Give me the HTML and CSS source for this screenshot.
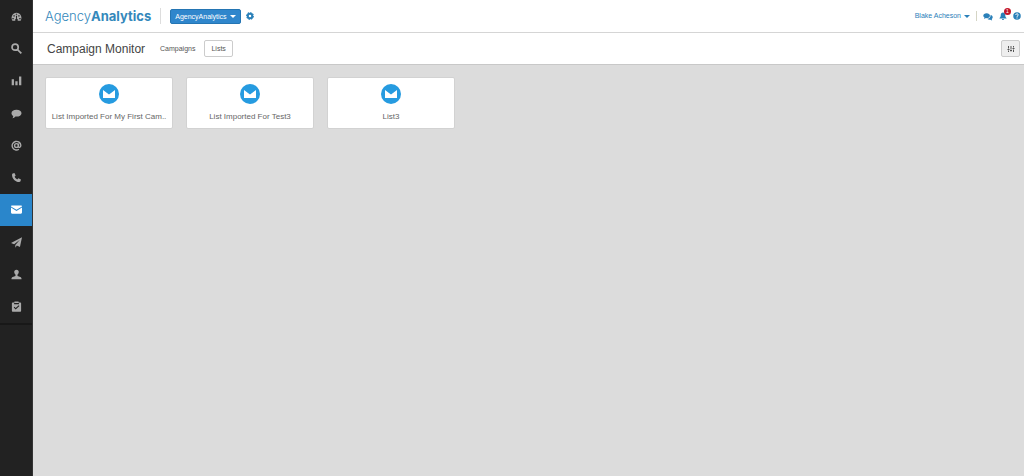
FILE: index.html
```
<!DOCTYPE html>
<html lang="en">
<head>
    <meta charset="utf-8">
    <title>Campaign Monitor</title>
    <link rel="stylesheet" href="styles.css">
</head>
<body>
<nav class="sidebar" aria-label="Main">
    <ul class="menu">
        <li><a href="#" aria-label="Dashboard"><svg viewBox="0 0 16 16"><path fill-rule="evenodd" d="M8 2.500A7.500 7.500 0 0 0 2 14h4.500a1.700 1.700 0 0 1 .9-2.600L7.200 7h1.600l-.2 4.400A1.700 1.700 0 0 1 9.500 14H14A7.500 7.500 0 0 0 8 2.500zM7 4h2v1.600H7zM3.500 6h2v2h-2zM10.500 6h2v2h-2zM2 10h2v2H2zM12 10h2v2h-2z"/></svg></a></li>
        <li><a href="#" aria-label="Search"><svg viewBox="0 0 16 16"><circle class="line" cx="6" cy="6" r="4.500"/><path class="line" d="M9.500 9.500l5.500 5.500"/></svg></a></li>
        <li><a href="#" aria-label="Reports"><svg viewBox="0 0 16 16"><path d="M1 6h3.300v9H1zM6.300 9h3.300v6H6.300zM11.700 2H15v13h-3.300z"/></svg></a></li>
        <li><a href="#" aria-label="Social"><svg viewBox="0 0 16 16"><path d="M8 2.500c4.300 0 7.300 2.200 7.300 5s-3 5-7.300 5l-1.500-.1C5.300 13.800 3.700 14.700 2 15c.8-1 1.300-2.200 1.200-3.500C1.600 10.600.7 9.200.7 7.500c0-2.800 3-5 7.300-5z"/></svg></a></li>
        <li><a href="#" aria-label="Email"><svg viewBox="0 0 16 16"><circle class="thin" cx="8" cy="8" r="2.800"/><path class="thin" d="M10.800 5v4.200c0 2.300 3.500 2 3.500-1.500A6.300 6.300 0 1 0 11.500 13.500"/></svg></a></li>
        <li><a href="#" aria-label="Calls"><svg viewBox="0 0 16 16"><path d="M2.500 2.200L5 1.500l1.800 3.700L5.200 7c.8 1.700 2 2.900 3.800 3.800l1.800-1.600 3.700 1.800-.7 2.500c-.3.700-1 1-2 1C6.500 14.500 1.500 9.500 1.500 4.200c0-1 .3-1.700 1-2z"/></svg></a></li>
        <li class="active"><a href="#" aria-label="Campaign Monitor"><svg viewBox="0 0 16 16"><path d="M0 3.500C0 2.700.5 2 1.500 2h13c1 0 1.500.7 1.500 1.500L8 8.500zM0 5l8 5 8-5v7.500c0 1-.5 1.500-1.500 1.500h-13C.5 14 0 13.500 0 12.500z"/></svg></a></li>
        <li><a href="#" aria-label="Send"><svg viewBox="0 0 16 16"><path d="M16 .5L13 14.500l-4.500-2L6.300 15.500V11.500L13 4 4.500 10.500 0 8.700z"/></svg></a></li>
        <li><a href="#" aria-label="Users"><svg viewBox="0 0 16 16"><path d="M8 1c2.200 0 3.400 1.500 3.300 3.500C11.200 6 10.500 7.500 9.500 8v2.200l4 1.300c1.200.4 1.800 1.200 1.800 2.800v.7H.7v-.7c0-1.600.6-2.400 1.800-2.800l4-1.300V8c-1-.5-1.700-2-1.800-3.500C4.600 2.500 5.800 1 8 1z"/></svg></a></li>
        <li><a href="#" aria-label="Tasks"><svg viewBox="0 0 16 16"><path fill-rule="evenodd" d="M2.500 2H5V.8h6V2h2.500c.8 0 1.200.5 1.200 1.200v11c0 .8-.4 1.300-1.200 1.300h-11c-.8 0-1.200-.5-1.200-1.300v-11C1.300 2.500 1.700 2 2.500 2zM4.500 3v1.800h7V3zM4 9.500L6.800 12.500 12.300 7.300 11.200 6.200 6.800 10.300 5.100 8.400z"/></svg></a></li>
    </ul>
</nav>
<div class="page">
    <header class="topbar">
        <a href="#" class="logo">Agency<b>Analytics</b></a>
        <button type="button" class="account">AgencyAnalytics<span class="caret"></span></button>
        <button type="button" class="icon" aria-label="Settings"><svg viewBox="0 0 16 16"><circle class="teeth" cx="8" cy="8" r="6.500"/><circle class="ring" cx="8" cy="8" r="4.500"/></svg></button>
        <div class="user">
            <a href="#" class="username">Blake Acheson<span class="caret"></span></a>
            <a href="#" class="icon chat" aria-label="Messages"><svg viewBox="0 0 18 16"><path d="M6.500 2C10 2 12.500 4 12.500 6.500S10 11 6.500 11l-1.200-.1L2 12.500l.7-2.500C1.300 9.200.5 8 .5 6.500.5 4 3 2 6.500 2z"/><path d="M13.700 5.500c2.300.6 3.800 2.100 3.800 4 0 1.200-.7 2.300-1.800 3l.8 2.500-3.500-1.300c-2.200.2-4.200-.3-5.400-1.500 3.700-.3 6.300-2.700 6.100-6.700z"/></svg></a>
            <a href="#" class="icon" aria-label="Alerts"><svg viewBox="0 0 16 16"><path d="M8 1c2.800 0 4.500 2 4.500 5 0 3 .8 4.800 2.500 6v1H1v-1c1.700-1.200 2.500-3 2.500-6 0-3 1.700-5 4.500-5zM6 13.800h4c0 1.200-.8 2-2 2s-2-.8-2-2z"/></svg><span class="badge">1</span></a>
            <a href="#" class="icon" aria-label="Help"><svg viewBox="0 0 16 16"><circle cx="8" cy="8" r="7.500"/><path class="mark" d="M5.500 6c0-3.300 5.300-3 5 0-.2 1.700-2.500 1.600-2.500 3.700M8 11v2"/></svg></a>
        </div>
    </header>
    <div class="subbar">
        <h1>Campaign Monitor</h1>
        <a href="#" class="tab">Campaigns</a>
        <a href="#" class="tab current">Lists</a>
        <button type="button" class="options" aria-label="Options"><svg viewBox="0 0 16 16"><path d="M2 2h2v5H2zM1 8h4v2H1zM2 11h2v3H2zM7 2h2v7H7zM6 10h4v2H6zM7 13h2v1H7zM12 2h2v3h-2zM11 6h4v2h-4zM12 9h2v5h-2z"/></svg></button>
    </div>
    <main class="lists">
        <a href="#" class="card">
            <svg viewBox="0 0 20 20"><circle cx="10" cy="10" r="10"/><path d="M4 6l6 4.500L16 6v8H4z"/></svg>
            <span>List Imported For My First Cam..</span>
        </a>
        <a href="#" class="card">
            <svg viewBox="0 0 20 20"><circle cx="10" cy="10" r="10"/><path d="M4 6l6 4.500L16 6v8H4z"/></svg>
            <span>List Imported For Test3</span>
        </a>
        <a href="#" class="card">
            <svg viewBox="0 0 20 20"><circle cx="10" cy="10" r="10"/><path d="M4 6l6 4.500L16 6v8H4z"/></svg>
            <span>List3</span>
        </a>
    </main>
</div>
</body>
</html>
```
FILE: styles.css
```
* {
    box-sizing: border-box;
}

body {
    margin: 0;
    display: flex;
    min-height: 100vh;
    background-color: #dcdcdc;
    font-family: "Liberation Sans", Arial, sans-serif;
    font-size: 7px;
    color: #555;
}

a {
    text-decoration: none;
    color: inherit;
}

button {
    font: inherit;
    cursor: pointer;
}

svg {
    display: block;
    fill: currentColor;
}

/* sidebar */
.sidebar {
    flex: none;
    width: 33px;
    background-color: #222;
    border-right: 1px solid #333;
}

.menu {
    display: grid;
    grid-auto-rows: 1fr;
    height: 325px;
    margin: 0;
    padding: 0;
    list-style: none;
    border-bottom: 2px solid #181818;
}

.menu a {
    display: flex;
    align-items: center;
    justify-content: center;
    height: 100%;
    color: #aaa;
}

.menu svg {
    width: 11px;
    height: 11px;
}

.menu .active a {
    background-color: #2a86cb;
    color: #fff;
}

.line, .thin, .ring, .teeth, .mark {
    fill: none;
    stroke: currentColor;
    stroke-width: 2.5;
}

.thin {
    stroke-width: 2;
}

.ring {
    stroke-width: 4;
}

.teeth {
    stroke-dasharray: 3 2;
}

.mark {
    stroke: #fff;
    stroke-width: 2;
}

/* header */
.page {
    flex: 1;
    min-width: 0;
}

.topbar, .subbar {
    display: flex;
    align-items: center;
    height: 33px;
    background-color: #fff;
    border-bottom: 1px solid #d5d5d5;
}

.topbar {
    padding: 0 3px 0 12px;
    color: #2a80b9;
}

.logo {
    padding-right: 9px;
    margin-right: 9px;
    border-right: 1px solid #ddd;
    font-family: Inter, "Liberation Sans", sans-serif;
    font-size: 13px;
    font-weight: 300;
    line-height: 16px;
    color: #3488bb;
}

.logo b {
    font-weight: 700;
}

.caret {
    display: inline-block;
    margin-left: 3px;
    border: 3px solid transparent;
    border-top-color: currentColor;
    border-bottom: 0;
    vertical-align: middle;
}

.account {
    height: 15px;
    padding: 0 4px;
    border: 1px solid #2475b3;
    border-radius: 2px;
    background-color: #2f86cc;
    color: #fff;
}

.icon {
    position: relative;
    padding: 0;
    border: 0;
    background: none;
    color: #2a80b9;
}

.icon svg {
    width: 8px;
    height: 8px;
}

.account + .icon {
    margin-left: 5px;
}

.user {
    display: flex;
    align-items: center;
    gap: 6px;
    margin-left: auto;
}

.username {
    padding-right: 6px;
    border-right: 1px solid #d5d5c5;
    line-height: 10px;
}

.chat svg {
    width: 10px;
    height: 9px;
}

.badge {
    position: absolute;
    top: -4px;
    right: -4px;
    width: 7px;
    height: 7px;
    border-radius: 50%;
    background-color: #c4162a;
    color: #fff;
    font-size: 5px;
    line-height: 7px;
    text-align: center;
}

/* page title and tabs */
.subbar {
    height: 32px;
    padding: 0 4px 0 14px;
    border-bottom-color: #c8c8c8;
}

h1 {
    margin: 0 8px 0 0;
    font-size: 12px;
    font-weight: normal;
    color: #444;
}

.tab {
    padding: 0 6px;
    border: 1px solid transparent;
    border-radius: 2px;
    line-height: 15px;
}

.current {
    margin-left: 2px;
    border-color: #ccc;
}

.options {
    display: flex;
    align-items: center;
    justify-content: center;
    width: 19px;
    height: 17px;
    margin-left: auto;
    padding: 0;
    border: 1px solid #ccc;
    border-radius: 2px;
    background-color: #eee;
    color: #555;
}

.options svg {
    width: 8px;
    height: 8px;
}

/* list cards */
.lists {
    display: grid;
    grid-template-columns: repeat(auto-fill, 128px);
    gap: 13px;
    padding: 12px;
}

.card {
    display: flex;
    flex-direction: column;
    align-items: center;
    gap: 7px;
    padding: 6px 4px;
    border: 1px solid #d2d2d2;
    border-radius: 2px;
    background-color: #fff;
    color: #666;
    font-size: 8px;
    line-height: 11px;
    white-space: nowrap;
}

.card svg {
    width: 20px;
    height: 20px;
}

.card circle {
    fill: #269be0;
}

.card path {
    fill: #fff;
}
```
